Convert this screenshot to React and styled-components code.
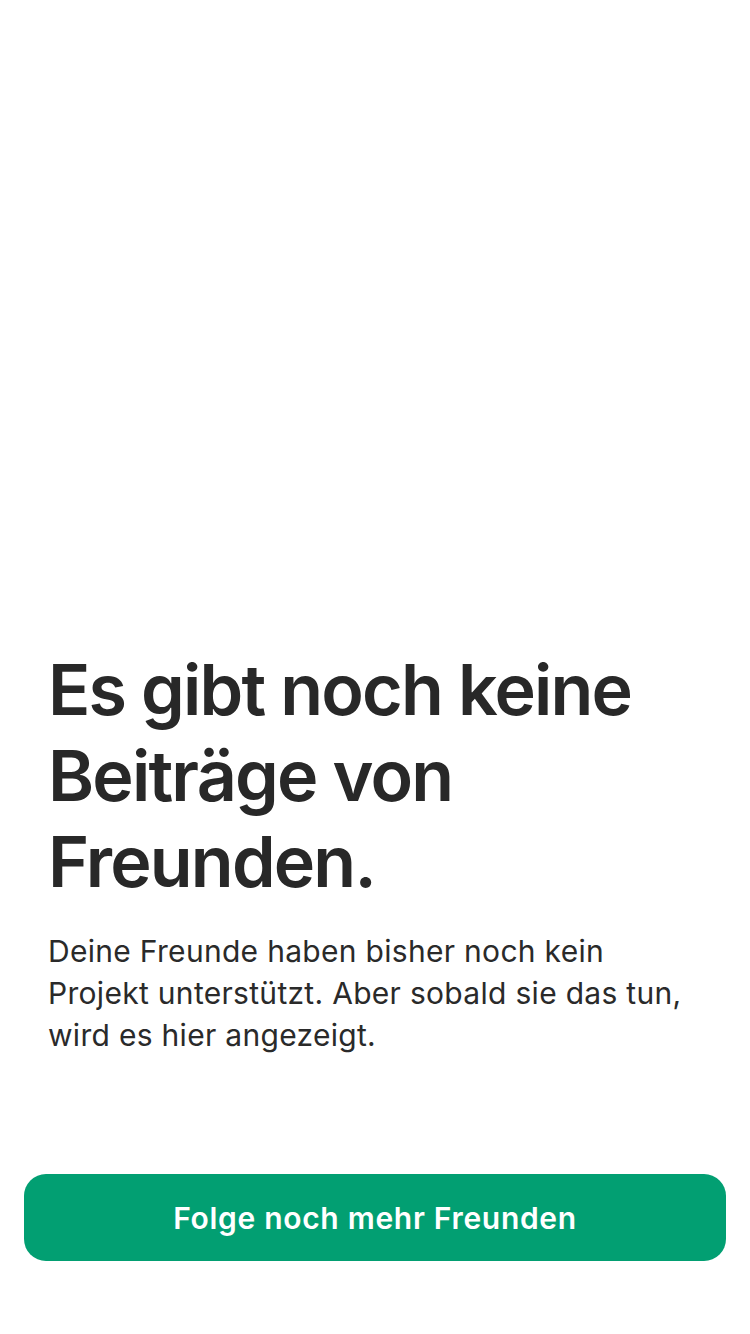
import React from 'react';
import styled, { createGlobalStyle } from 'styled-components';

const GlobalStyle = createGlobalStyle`
  html, body {
    margin: 0;
    padding: 0;
    background: #fff;
  }
  body {
    font-family: Inter, "Noto Sans", "Liberation Sans", sans-serif;
    -webkit-font-smoothing: antialiased;
  }
`;

const Page = styled.div`
  min-height: 1334px;
  box-sizing: border-box;
  display: flex;
  flex-direction: column;
  justify-content: flex-end;
  padding: 0 24px 73px;
`;

const Content = styled.div`
  padding: 0 24px;
  margin-bottom: 118px;
`;

const Title = styled.h1`
  margin: 0 0 25px;
  font-size: 70px;
  line-height: 86px;
  font-weight: 600;
  letter-spacing: -1.8px;
  color: #282828;
`;

const Text = styled.p`
  margin: 0;
  font-size: 30px;
  line-height: 42px;
  font-weight: 400;
  letter-spacing: 0.3px;
  color: #2a2a2a;
`;

const Button = styled.button`
  height: 87px;
  width: 100%;
  border: none;
  border-radius: 22px;
  background: #029f72;
  color: #fff;
  font-family: inherit;
  font-size: 30px;
  font-weight: 600;
  letter-spacing: 0.7px;
  cursor: pointer;
`;

const App = () => (
  <>
    <GlobalStyle />
    <Page>
      <Content>
        <Title>Es gibt noch keine Beiträge von Freunden.</Title>
        <Text>
          Deine Freunde haben bisher noch kein Projekt unterstützt. Aber sobald sie das tun, wird es hier angezeigt.
        </Text>
      </Content>
      <Button>Folge noch mehr Freunden</Button>
    </Page>
  </>
);

export default App;
